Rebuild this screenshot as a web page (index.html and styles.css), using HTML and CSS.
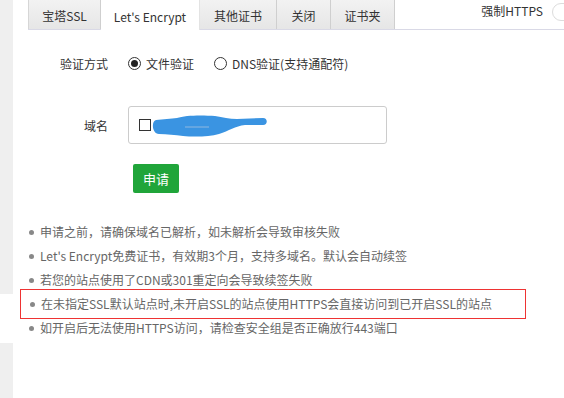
FILE: index.html
```html
<!DOCTYPE html>
<html>
<head>
<meta charset="utf-8">
<link rel="stylesheet" href="styles.css">
</head>
<body>
<div class="page">
  <div class="strip">
    <div class="strip-top"></div>
    <div class="strip-gap"></div>
    <div class="strip-bottom"></div>
  </div>
  <div class="main">
    <div class="tabbar">
      <div class="tab">宝塔SSL</div>
      <div class="tab active">Let's Encrypt</div>
      <div class="tab">其他证书</div>
      <div class="tab">关闭</div>
      <div class="tab">证书夹</div>
      <div class="force">
        <span class="force-label">强制HTTPS</span>
        <span class="switch"></span>
      </div>
    </div>

    <div class="row row-method">
      <div class="label">验证方式</div>
      <div class="field radios">
        <label class="radio"><span class="dot checked"></span>文件验证</label>
        <label class="radio"><span class="dot"></span>DNS验证(支持通配符)</label>
      </div>
    </div>

    <div class="row row-domain">
      <div class="label">域名</div>
      <div class="field">
        <div class="inputbox">
          <span class="check"></span>
          <svg class="scribble" width="118" height="22" viewBox="0 0 118 22">
            <path d="M5 5 C12 4 20 4 26 3 C34 0 52 0 64 1 C72 2 78 4 86 4 L112 3 C117 3 117 10 112 10 L94 10 C84 11 78 16 68 19 C58 22 42 22 32 21 C24 20 16 19 8 19 C1 19 0 6 5 5 Z" fill="#3a94e2"/>
            <path d="M34 12 L58 12" stroke="#8fb8e0" stroke-width="1" fill="none"/>
          </svg>
        </div>
      </div>
    </div>

    <div class="row row-btn">
      <div class="label"></div>
      <div class="field"><button class="btn">申请</button></div>
    </div>

    <ul class="notes">
      <li>申请之前，请确保域名已解析，如未解析会导致审核失败</li>
      <li>Let's Encrypt免费证书，有效期3个月，支持多域名。默认会自动续签</li>
      <li>若您的站点使用了CDN或301重定向会导致续签失败</li>
      <li class="hl">在未指定SSL默认站点时,未开启SSL的站点使用HTTPS会直接访问到已开启SSL的站点</li>
      <li>如开启后无法使用HTTPS访问，请检查安全组是否正确放行443端口</li>
    </ul>
  </div>
</div>
</body>
</html>
```

FILE: styles.css
```css
html, body {
  margin: 0;
  padding: 0;
  background: #fff;
}
body {
  font-family: "Noto Sans CJK SC", "Noto Sans", sans-serif;
  font-size: 12px;
  color: #555;
}
.page {
  display: flex;
  width: 564px;
  height: 398px;
  overflow: hidden;
}
.strip {
  width: 13px;
  flex: 0 0 13px;
  display: flex;
  flex-direction: column;
}
.strip-top { height: 294px; background: #efefef; }
.strip-gap { height: 49px; background: #fff; }
.strip-bottom { flex: 1; background: #efefef; }

.main {
  flex: 1;
  padding-left: 15px;
  position: relative;
  min-width: 0;
}

.tabbar {
  display: flex;
  height: 30px;
  border-bottom: 1px solid #d9d9e6;
  box-sizing: border-box;
  align-items: stretch;
}
.tab {
  display: flex;
  align-items: center;
  justify-content: center;
  padding-top: 2px;
  box-sizing: border-box;
  white-space: nowrap;
  flex: 0 0 auto;
  background: linear-gradient(#f2f2f2, #e6e6e6);
  border-right: 1px solid #cfcfcf;
  color: #333;
  font-size: 12px;
}
.tab:first-child { border-left: 1px solid #d6d6d6; width: 73px; }
.tab:nth-child(2) { width: 99px; }
.tab:nth-child(3) { width: 77px; }
.tab:nth-child(4) { width: 54px; }
.tab:nth-child(5) { width: 64px; }
.tab.active {
  background: #fff;
  border-right: 1px solid #e3e3e3;
  margin-bottom: -1px;
}
.force {
  margin-left: auto;
  display: flex;
  align-items: flex-start;
  padding-top: 2px;
  margin-right: -24px;
  flex: 0 0 auto;
}
.force-label {
  color: #333;
  font-size: 12px;
  line-height: 18px;
  margin-right: 9px;
  white-space: nowrap;
}
.switch {
  width: 36px;
  height: 18px;
  border: 1px solid #dcdcdc;
  border-radius: 10px;
  box-sizing: border-box;
  background: #fff;
  position: relative;
  margin-top: 1px;
}

.row {
  display: flex;
  align-items: center;
}
.label {
  width: 80px;
  text-align: right;
  color: #333;
  font-size: 12px;
  margin-right: 20px;
  flex: 0 0 80px;
}
.row-method { margin-top: 22px; height: 22px; }
.row-domain { margin-top: 32px; }
.row-btn { margin-top: 20px; }

.radios { display: flex; align-items: center; color: #333; }
.radio {
  display: flex;
  align-items: center;
  margin-right: 20px;
}
.dot {
  width: 13px;
  height: 13px;
  border: 1px solid #333;
  border-radius: 50%;
  box-sizing: border-box;
  margin-right: 5px;
  position: relative;
}
.dot.checked::after {
  content: "";
  position: absolute;
  left: 2px;
  top: 2px;
  width: 7px;
  height: 7px;
  border-radius: 50%;
  background: #222;
}

.inputbox {
  width: 259px;
  height: 38px;
  border: 1px solid #ccc;
  border-radius: 3px;
  box-sizing: border-box;
  display: flex;
  align-items: center;
  padding-left: 10px;
}
.check {
  width: 12px;
  height: 12px;
  border: 1px solid #333;
  box-sizing: border-box;
  flex: 0 0 12px;
}
.scribble { flex: 0 0 auto; margin-left: 0; margin-top: 2px; }

.btn {
  margin-left: 5px;
  width: 46px;
  height: 29px;
  border: 0;
  border-radius: 2px;
  background: #20a53a;
  color: #fff;
  font-family: "Noto Sans CJK SC", sans-serif;
  font-size: 13px;
  padding: 0;
}

.notes {
  list-style: none;
  margin: 27px 0 0 0;
  padding: 0;
}
.notes li {
  position: relative;
  padding-left: 12px;
  height: 24px;
  line-height: 24px;
  color: #666;
  font-size: 12px;
  white-space: nowrap;
}
.notes li::before {
  content: "";
  position: absolute;
  left: 1px;
  top: 10px;
  width: 5px;
  height: 5px;
  border-radius: 50%;
  background: #888;
}
.notes li.hl {
  margin: -3px 0 -3px -8px;
  padding-left: 20px;
  width: 506px;
  box-sizing: border-box;
  border: 1px solid #e33;
  height: 30px;
  line-height: 28px;
}
.notes li.hl::before { left: 9px; top: 12px; }
```
